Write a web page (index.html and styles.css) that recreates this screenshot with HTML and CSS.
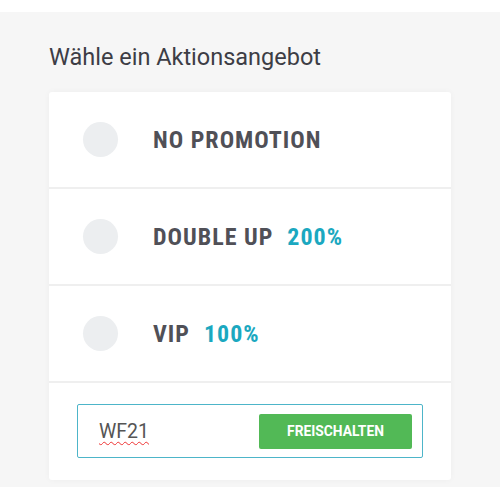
FILE: index.html
```html
<!DOCTYPE html>
<html lang="de">
<head>
  <meta charset="UTF-8" />
  <meta name="viewport" content="width=device-width, initial-scale=1.0"/>
  <title>Aktionsangebot</title>
  <link rel="stylesheet" href="styles.css">
</head>
<body>
  <div class="panel">
    <h2 class="title">Wähle ein Aktionsangebot</h2>

    <div class="card">
      <label class="option">
        <span class="radio"></span>
        <span class="name">NO PROMOTION</span>
      </label>
      <label class="option">
        <span class="radio"></span>
        <span class="name">DOUBLE UP</span>
        <span class="pct">200%</span>
      </label>
      <label class="option">
        <span class="radio"></span>
        <span class="name">VIP</span>
        <span class="pct">100%</span>
      </label>

      <div class="code-row">
        <div class="code-box">
          <span class="code">WF21</span>
          <button class="unlock">FREISCHALTEN</button>
        </div>
      </div>
    </div>
  </div>
</body>
</html>
```

FILE: styles.css
```css
body { margin: 0; padding-top: 12px; background: #fff; font-family: Roboto, "Liberation Sans", sans-serif; }
.panel { background: #f6f6f6; padding: 30px 49px 5px; height: 440px; }
.title { margin: 0 0 20px; font-size: 23.5px; font-weight: 400; color: #3d3d45; line-height: 30px; }
.card { background: #fff; border-radius: 3px; box-shadow: 0 0 6px rgba(0,0,0,0.04); }
.option { display: flex; align-items: center; height: 95px; border-bottom: 2px solid #efefef; padding-left: 34px; }
.radio { width: 35px; height: 35px; border-radius: 50%; background: #eceef0; margin-right: 35px; }
.name, .pct { font-size: 24px; font-weight: 700; letter-spacing: 1px; font-stretch: condensed; }
.name { color: #505057; }
.pct { color: #1ba8c0; margin-left: 14px; }
.code-row { padding: 21px 28px 22px; }
.code-box { display: flex; align-items: center; justify-content: space-between; height: 52px; border: 1px solid #4db5c9; border-radius: 2px; padding: 0 10px 0 21px; }
.code { font-size: 19.5px; color: #555; text-decoration: underline wavy #e33; text-underline-offset: 3px; text-decoration-thickness: 1px; }
.unlock { width: 153px; height: 35px; border: 0; border-radius: 2px; background: #52b956; color: #fff; font-family: Roboto, sans-serif; font-size: 13.8px; font-weight: 700; }
```
